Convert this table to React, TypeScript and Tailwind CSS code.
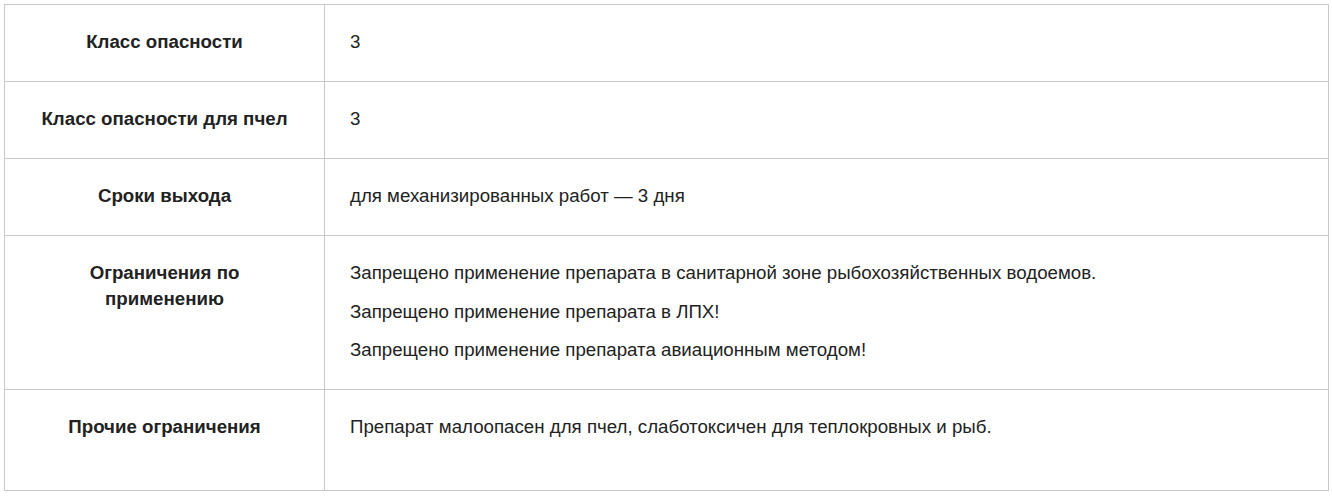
import React from "react";

const rows: { h: string[]; v: string[]; extra?: boolean }[] = [
  { h: ["Класс опасности"], v: ["3"] },
  { h: ["Класс опасности для пчел"], v: ["3"] },
  { h: ["Сроки выхода"], v: ["для механизированных работ — 3 дня"] },
  {
    h: ["Ограничения по", "применению"],
    v: [
      "Запрещено применение препарата в санитарной зоне рыбохозяйственных водоемов.",
      "Запрещено применение препарата в ЛПХ!",
      "Запрещено применение препарата авиационным методом!",
    ],
  },
  {
    h: ["Прочие ограничения"],
    v: ["Препарат малоопасен для пчел, слаботоксичен для теплокровных и рыб."],
    extra: true,
  },
];

export default function App() {
  return (
    <div className="bg-white w-[1332px] h-[496px] pt-[4px] pl-[4px] font-['Liberation_Sans',Arial,sans-serif] text-[18.7px] leading-[26px] text-[#222]">
      <table className="w-[1325px] border-collapse table-fixed">
        <colgroup>
          <col className="w-[320px]" />
          <col />
        </colgroup>
        <tbody>
          {rows.map((r, i) => (
            <tr key={i}>
              <td
                className={`border border-[#c8c8cc] align-top text-center font-bold px-[16px] pt-[24px] ${
                  r.extra ? "pb-[50px]" : "pb-[26px]"
                }`}
              >
                {r.h.map((t, j) => (
                  <div key={j}>{t}</div>
                ))}
              </td>
              <td
                className={`border border-[#c8c8cc] align-top pl-[25px] pr-[20px] pt-[24px] ${
                  r.extra ? "pb-[50px]" : "pb-[26px]"
                }`}
              >
                <div className="flex flex-col gap-[12.5px]">
                  {r.v.map((t, j) => (
                    <p key={j}>{t}</p>
                  ))}
                </div>
              </td>
            </tr>
          ))}
        </tbody>
      </table>
    </div>
  );
}
